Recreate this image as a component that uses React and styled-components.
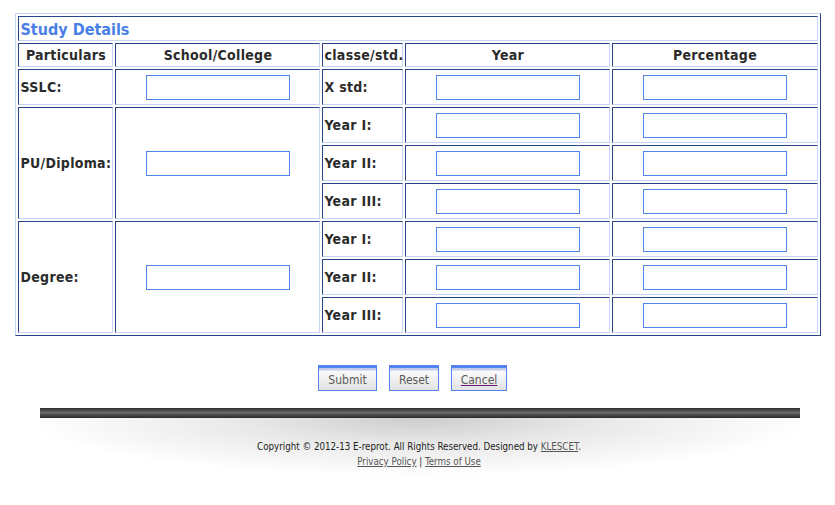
import React from "react";
import styled, { createGlobalStyle } from "styled-components";

const Global = createGlobalStyle`
  html, body { margin: 0; padding: 0; background: #fff; }
  body { font-family: "DejaVu Sans Condensed", "DejaVu Sans", sans-serif; color: #2b2b2b; }
`;

const DARK = "#27468a";
const LIGHT = "#c6d5f4";

const Page = styled.div`
  padding-top: 13px;
  display: flex;
  flex-direction: column;
  align-items: center;
`;

const Table = styled.table`
  width: 805px;
  margin-left: 1px;
  table-layout: fixed;
  border-collapse: separate;
  border-spacing: 2px;
  border: 1px solid;
  border-color: ${LIGHT} ${DARK} ${DARK} ${LIGHT};
`;

const Col = styled.col`
  width: ${(p) => p.$w}px;
`;

const Cell = styled.td`
  box-sizing: border-box;
  border: 1px solid;
  border-color: ${DARK} ${LIGHT} ${LIGHT} ${DARK};
  padding: 0 1px;
  height: ${(p) => p.$h || 36}px;
  font-size: 14px;
  font-weight: bold;
  letter-spacing: 0.3px;
  color: #2b2b2b;
  text-align: ${(p) => (p.$center ? "center" : "left")};
  vertical-align: middle;
`;

const TitleCell = styled(Cell)`
  height: 25px;
  font-size: 16px;
  color: #4a7fe6;
  letter-spacing: 0;
  padding-top: 1px;
`;

const Input = styled.input`
  box-sizing: border-box;
  width: 144px;
  height: 25px;
  border: 1px solid #4f85ec;
  background: #fff;
  padding: 0 3px;
  display: block;
  margin: 0 auto;
`;

const Buttons = styled.div`
  display: flex;
  gap: 12px;
  margin-top: 29px;
  margin-left: -10px;
`;

const Button = styled.button`
  box-sizing: border-box;
  width: ${(p) => p.$w}px;
  height: 26px;
  border: 1px solid #5283ee;
  border-top: 3px solid #5283ee;
  background: linear-gradient(#c4cbea 0, #c4cbea 2px, #fafafa 3px, #eeeeee 60%, #e2e2e2 100%);
  color: #5a5a5a;
  font-family: "DejaVu Sans Condensed", "DejaVu Sans", sans-serif;
  font-size: 12px;
  padding: 2px 0 0;
  cursor: pointer;
`;

const LinkText = styled.span`
  text-decoration: underline;
  text-decoration-color: #6b1a7a;
`;

const Footer = styled.div`
  margin-top: 17px;
  width: 760px;
  margin-left: 4px;
  display: flex;
  flex-direction: column;
  align-items: center;
`;

const Bar = styled.div`
  width: 760px;
  height: 10px;
  background: linear-gradient(#2e2e2e 0, #454545 20%, #6b6b6b 45%, #4a4a4a 70%, #2a2a2a 100%);
`;

const Shade = styled.div`
  width: 760px;
  padding-top: 23px;
  height: 58px;
  background: radial-gradient(ellipse 52% 100% at 50% 0, rgba(0,0,0,0.2) 0%, rgba(0,0,0,0.09) 45%, rgba(0,0,0,0) 100%);
  display: flex;
  flex-direction: column;
  align-items: center;
  gap: 3px;
  font-size: 9.7px;
  color: #222;
  box-sizing: border-box;
  margin-left: -1px;
`;

const FootLine = styled.div`
  line-height: 12px;
`;

const FootLink = styled.a`
  color: #555;
  text-decoration: underline;
`;

const yearRows = ["Year I:", "Year II:", "Year III:"];

export default function App() {
  return (
    <Page>
      <Global />
      <Table>
        <colgroup>
          <Col $w={95} />
          <Col $w={205} />
          <Col $w={81} />
          <Col $w={205} />
          <Col $w={205} />
        </colgroup>
        <tbody>
          <tr>
            <TitleCell colSpan={5}>Study Details</TitleCell>
          </tr>
          <tr>
            <Cell $h={24} $center>Particulars</Cell>
            <Cell $h={24} $center>School/College</Cell>
            <Cell $h={24} $center>classe/std.</Cell>
            <Cell $h={24} $center>Year</Cell>
            <Cell $h={24} $center>Percentage</Cell>
          </tr>
          <tr>
            <Cell>SSLC:</Cell>
            <Cell><Input /></Cell>
            <Cell>X std:</Cell>
            <Cell><Input /></Cell>
            <Cell><Input /></Cell>
          </tr>
          {["PU/Diploma:", "Degree:"].map((label) =>
            yearRows.map((y, i) => (
              <tr key={label + y}>
                {i === 0 && <Cell rowSpan={3}>{label}</Cell>}
                {i === 0 && <Cell rowSpan={3}><Input /></Cell>}
                <Cell>{y}</Cell>
                <Cell><Input /></Cell>
                <Cell><Input /></Cell>
              </tr>
            ))
          )}
        </tbody>
      </Table>
      <Buttons>
        <Button $w={59}>Submit</Button>
        <Button $w={50}>Reset</Button>
        <Button $w={56}><LinkText>Cancel</LinkText></Button>
      </Buttons>
      <Footer>
        <Bar />
        <Shade>
          <FootLine>
            Copyright © 2012-13 E-reprot. All Rights Reserved. Designed by <FootLink href="#">KLESCET</FootLink>.
          </FootLine>
          <FootLine>
            <FootLink href="#">Privacy Policy</FootLink> | <FootLink href="#">Terms of Use</FootLink>
          </FootLine>
        </Shade>
      </Footer>
    </Page>
  );
}
